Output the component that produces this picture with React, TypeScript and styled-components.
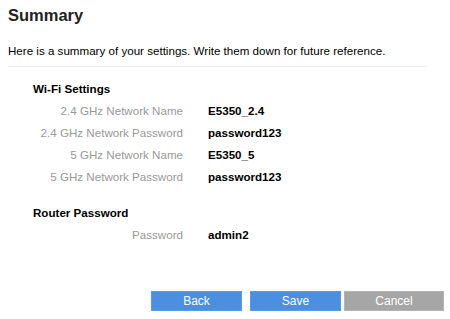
import styled, { createGlobalStyle } from 'styled-components';

const GlobalStyle = createGlobalStyle`
	html, body {
		margin: 0;
		padding: 0;
		background: #fff;
	}
	body {
		font-family: 'Liberation Sans', Arial, sans-serif;
		color: #000;
	}
`;

const Page = styled.div`
	width: 450px;
	height: 319px;
	padding: 0 6px 0 8px;
	box-sizing: border-box;
	display: flex;
	flex-direction: column;
`;

const Title = styled.h1`
	margin: 5px 0 0;
	font-size: 16.5px;
	line-height: 20px;
	font-weight: bold;
	color: #222;
`;

const Intro = styled.p`
	margin: 19px 0 0;
	font-size: 11.6px;
	line-height: 14px;
	color: #000;
`;

const Divider = styled.hr`
	width: 419px;
	margin: 8px 0 0;
	border: 0;
	border-top: 1px solid #eee;
`;

const Section = styled.section<{ $top: number }>`
	padding-left: 25px;
	margin-top: ${(props) => props.$top}px;
`;

const SectionTitle = styled.h2`
	margin: 0;
	font-size: 11.6px;
	line-height: 15px;
	font-weight: bold;
`;

const Rows = styled.dl`
	margin: 0;
	padding-top: 8px;
	display: grid;
	grid-template-columns: 150px auto;
	column-gap: 25px;
	row-gap: 7.5px;
	font-size: 11.6px;
	line-height: 14.5px;
`;

const Label = styled.dt`
	text-align: right;
	color: #999;
`;

const Value = styled.dd`
	margin: 0;
	font-weight: bold;
`;

const Actions = styled.div`
	margin-top: auto;
	margin-bottom: 8px;
	display: flex;
	justify-content: flex-end;
`;

const Button = styled.button<{ $variant?: 'primary' | 'muted'; $width: number; $gap: number }>`
	width: ${(props) => props.$width}px;
	height: 20px;
	margin-left: ${(props) => props.$gap}px;
	padding: 0;
	border: 1px solid ${(props) => (props.$variant === 'muted' ? '#b4b4b4' : '#5b9be6')};
	background: ${(props) => (props.$variant === 'muted' ? '#a6a6a6' : '#4a8fe0')};
	color: #fff;
	font-family: 'Liberation Sans', Arial, sans-serif;
	font-size: 12px;
	cursor: pointer;
`;

const wifi = [
	['2.4 GHz Network Name', 'E5350_2.4'],
	['2.4 GHz Network Password', 'password123'],
	['5 GHz Network Name', 'E5350_5'],
	['5 GHz Network Password', 'password123'],
];

function App() {
	return (
		<>
			<GlobalStyle />
			<Page>
				<Title>Summary</Title>
				<Intro>Here is a summary of your settings. Write them down for future reference.</Intro>
				<Divider />
				<Section $top={14}>
					<SectionTitle>Wi-Fi Settings</SectionTitle>
					<Rows>
						{wifi.map(([label, value]) => (
							<>
								<Label key={label}>{label}</Label>
								<Value key={label + '-v'}>{value}</Value>
							</>
						))}
					</Rows>
				</Section>
				<Section $top={20}>
					<SectionTitle>Router Password</SectionTitle>
					<Rows>
						<Label>Password</Label>
						<Value>admin2</Value>
					</Rows>
				</Section>
				<Actions>
					<Button $width={91} $gap={0}>Back</Button>
					<Button $width={91} $gap={8}>Save</Button>
					<Button $variant="muted" $width={100} $gap={3}>Cancel</Button>
				</Actions>
			</Page>
		</>
	);
}

export default App;
